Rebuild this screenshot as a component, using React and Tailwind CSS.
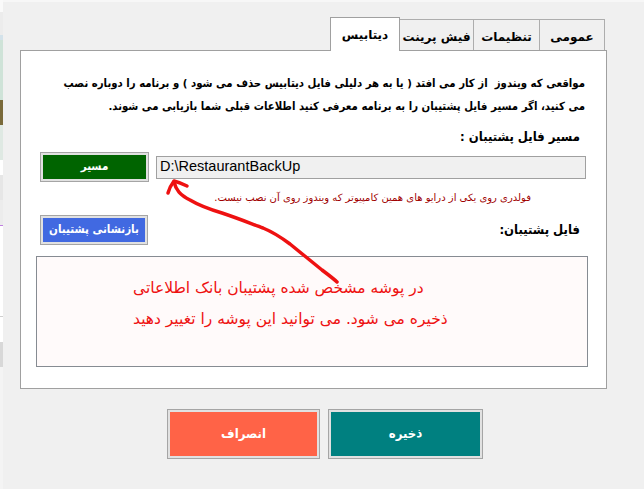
import React from 'react';

const fa = "[font-family:'DejaVu_Sans',sans-serif]";
const faC = "[font-family:'DejaVu_Sans_Condensed','DejaVu_Sans',sans-serif]";

function Tab({ label, width, active }) {
  if (active) {
    return (
      <div
        className={`${fa} relative z-10 -mb-px flex h-[34px] items-center justify-center border border-b-0 border-[#a0a0a0] bg-white pt-px text-[12px] font-bold text-black`}
        style={{ width }}
      >
        {label}
      </div>
    );
  }
  return (
    <div
      className={`${fa} -ml-px flex h-[31px] items-center justify-center border border-b-0 border-[#adadad] bg-[#f0f0f0] pt-[3px] text-[12px] font-bold text-black`}
      style={{ width }}
    >
      {label}
    </div>
  );
}

function WinButton({ label, color, className = '', textClass = '' }) {
  return (
    <div className={`border border-[#a5a5a5] bg-[#e1e1e1] p-[2px] ${className}`}>
      <div className={`${faC} flex h-full w-full items-center justify-center text-white ${textClass}`} style={{ backgroundColor: color }}>
        {label}
      </div>
    </div>
  );
}

function Arrow() {
  return (
    <svg className="pointer-events-none absolute left-0 top-0" width="644" height="489" viewBox="0 0 644 489">
      <g fill="none" stroke="#ee1111" strokeWidth="3.5" strokeLinecap="round" strokeLinejoin="round">
        <path d="M174 182 C176 190 180 195 190 200 C200 206 212 210 222 213 C240 219 252 224 263 228 C275 233 282 238 290 244 C300 252 312 262 322 270 C330 276 334 279 337 282" />
        <path d="M168 193 C169 189 171 185 174 181 C178 182 183 184 187 186" />
      </g>
    </svg>
  );
}

export default function App() {
  return (
    <div dir="ltr" className="relative flex h-[489px] w-[644px] overflow-hidden bg-[#f0f0f0]">
      {/* sliver of the window behind */}
      <div className="flex w-[3px] flex-col">
        <div className="h-[12px] bg-[#fafafa]" />
        <div className="h-[23px] bg-[#ececec]" />
        <div className="h-[5px] bg-[#d3e2ea]" />
        <div className="h-[60px] bg-[#cfe3d8]" />
        <div className="h-[25px] bg-[#7a6a3a]" />
        <div className="h-[35px] bg-[#dfe9e3]" />
        <div className="h-[15px] bg-white" />
        <div className="h-[25px] bg-[#e6e6e6]" />
        <div className="h-[25px] bg-[#ececec]" />
        <div className="h-px bg-[#c080e0]" />
        <div className="h-[90px] bg-white" />
        <div className="h-px bg-[#cfcfcf]" />
        <div className="h-[25px] bg-white" />
        <div className="h-[25px] bg-[#d8d8d8]" />
        <div className="flex-1 bg-[#f4f4f4]" />
      </div>

      <div className="flex flex-1 flex-col">
        <div className="h-[2px] bg-[#f7f7f7]" />
        <div className="ml-[17px] mt-[15px] w-[587px]">
          {/* tabs */}
          <div dir="rtl" className="flex items-end pr-[2px]">
            <Tab label="عمومی" width={66} />
            <Tab label="تنظیمات" width={67} />
            <Tab label="فیش پرینت" width={75} />
            <Tab label="دیتابیس" width={70} active />
          </div>

          {/* panel */}
          <div className="h-[339px] border border-[#a0a0a0] bg-white">
            <div dir="rtl" className="flex flex-col">
              <p className={`${faC} mr-[21px] mt-[21px] whitespace-nowrap text-[11.3px] font-bold leading-[23px] text-black`}>
                مواقعی که ویندوز&nbsp; از کار می افتد ( یا به هر دلیلی فایل دیتابیس حذف می شود ) و برنامه را دوباره نصب
                <br />
                می کنید، اگر مسیر فایل پشتیبان را به برنامه معرفی کنید اطلاعات قبلی شما بازیابی می شوند.
              </p>

              <div className={`${faC} mr-[26px] mt-[10px] text-[13px] font-bold leading-[18px] text-black`}>مسیر فایل پشتیبان :</div>

              <div className="mt-[6px] flex items-center">
                <div className="mr-[20px] flex h-[23px] w-[430px] items-center border border-[#a0a0a0] bg-[#f0f0f0] pl-[3px]" dir="ltr">
                  <span className="[font-family:'Liberation_Sans',sans-serif] text-[14.5px] text-black">D:\RestaurantBackUp</span>
                </div>
                <WinButton label="مسیر" color="#006400" className="mr-[7px] h-[30px] w-[109px]" textClass="text-[11.5px] font-bold" />
              </div>

              <div className={`${fa} mr-[75px] mt-[9px] text-[10px] leading-[14px] text-[#a00000]`}>
                فولدری روی یکی از درایو های همین کامپیوتر که ویندوز روی آن نصب نیست.
              </div>

              <div className="mt-[10px] flex items-center justify-between">
                <div className={`${faC} mr-[26px] text-[13px] font-bold text-black`}>فایل پشتیبان:</div>
                <WinButton label="بازنشانی پشتیبان" color="#4169e1" className="ml-[19px] h-[30px] w-[108px]" textClass="text-[11.5px] font-bold" />
              </div>

              <div dir="ltr" className="ml-[15px] mr-[18px] mt-[11px] h-[111px] border border-[#868b92] bg-[#fffafa]">
                <div dir="rtl" className={`${fa} ml-[96px] mt-[16px] w-fit text-left text-[15.5px] leading-[31px] text-[#ee1111]`}>
                  در پوشه مشخص شده پشتیبان بانک اطلاعاتی
                  <br />
                  ذخیره می شود. می توانید این پوشه را تغییر دهید
                </div>
              </div>
            </div>
          </div>
        </div>

        {/* footer buttons */}
        <div className="ml-[164px] mt-[20px] flex gap-[8px]">
          <WinButton label="انصراف" color="#ff6347" className="h-[50px] w-[153px]" textClass="text-[13px] font-bold" />
          <WinButton label="ذخیره" color="#008080" className="h-[50px] w-[155px]" textClass="text-[13px] font-bold" />
        </div>
      </div>

      <Arrow />
    </div>
  );
}
